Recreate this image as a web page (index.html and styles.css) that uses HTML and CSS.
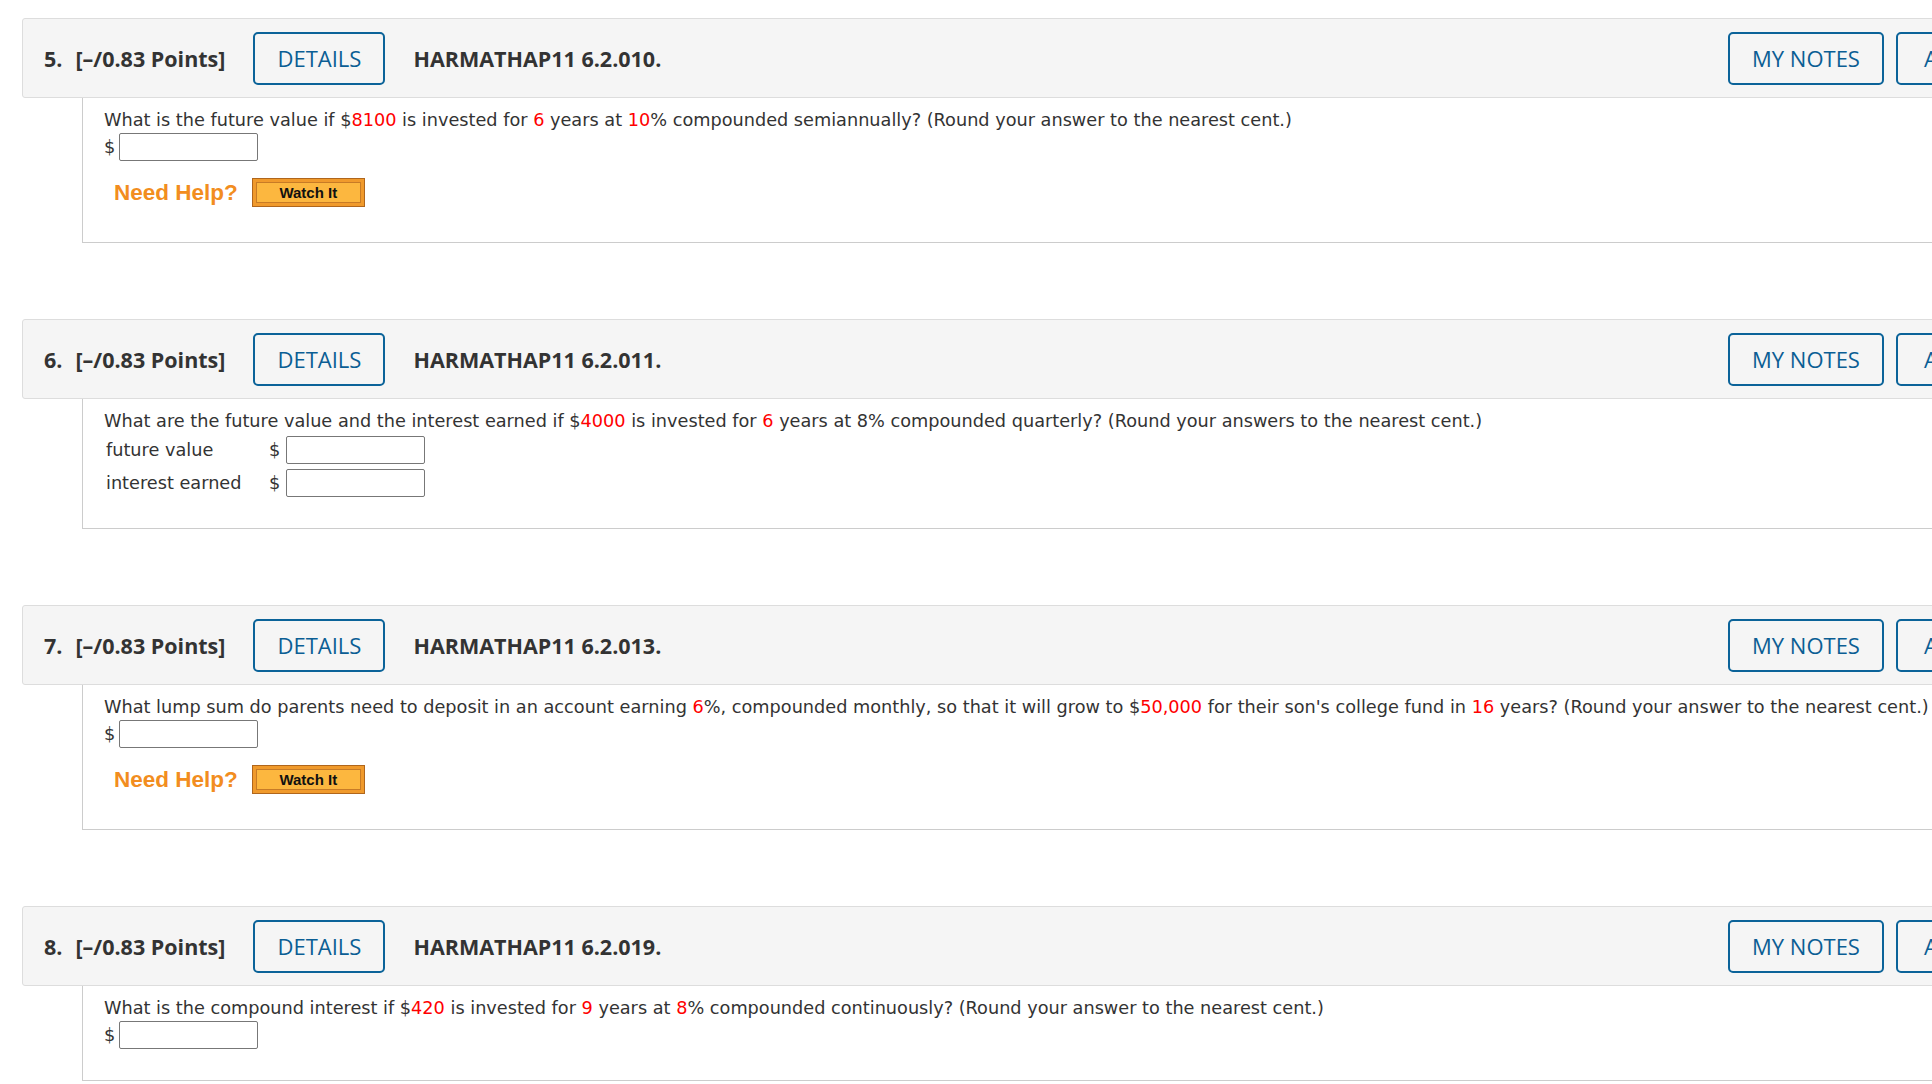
FILE: index.html
```html
<!DOCTYPE html>
<html lang="en">
<head>
<meta charset="utf-8">
<title>Assignment</title>
<link rel="stylesheet" href="styles.css">
</head>
<body>
<div class="page">

  <section class="question">
    <div class="q-head">
      <span class="q-num">5.</span>
      <span class="q-points">[&ndash;/0.83 Points]</span>
      <button class="btn btn-details">DETAILS</button>
      <span class="q-title">HARMATHAP11 6.2.010.</span>
      <button class="btn btn-notes">MY NOTES</button>
      <button class="btn btn-ask">ASK YOUR TEACHER</button>
    </div>
    <div class="q-body">
      <p class="q-text">What is the future value if $<span class="red">8100</span> is invested for <span class="red">6</span> years at <span class="red">10</span>% compounded semiannually? (Round your answer to the nearest cent.)</p>
      <div class="answer-row"><span class="dollar">$</span><input class="answer" type="text"></div>
      <div class="help-row"><span class="need-help">Need Help?</span><button class="watch"><span class="watch-inner">Watch It</span></button></div>
    </div>
  </section>

  <section class="question">
    <div class="q-head">
      <span class="q-num">6.</span>
      <span class="q-points">[&ndash;/0.83 Points]</span>
      <button class="btn btn-details">DETAILS</button>
      <span class="q-title">HARMATHAP11 6.2.011.</span>
      <button class="btn btn-notes">MY NOTES</button>
      <button class="btn btn-ask">ASK YOUR TEACHER</button>
    </div>
    <div class="q-body">
      <p class="q-text">What are the future value and the interest earned if $<span class="red">4000</span> is invested for <span class="red">6</span> years at 8% compounded quarterly? (Round your answers to the nearest cent.)</p>
      <div class="answer-grid">
        <span class="label">future value</span><span class="dollar">$</span><input class="answer" type="text">
        <span class="label">interest earned</span><span class="dollar">$</span><input class="answer" type="text">
      </div>
    </div>
  </section>

  <section class="question">
    <div class="q-head">
      <span class="q-num">7.</span>
      <span class="q-points">[&ndash;/0.83 Points]</span>
      <button class="btn btn-details">DETAILS</button>
      <span class="q-title">HARMATHAP11 6.2.013.</span>
      <button class="btn btn-notes">MY NOTES</button>
      <button class="btn btn-ask">ASK YOUR TEACHER</button>
    </div>
    <div class="q-body">
      <p class="q-text">What lump sum do parents need to deposit in an account earning <span class="red">6</span>%, compounded monthly, so that it will grow to $<span class="red">50,000</span> for their son's college fund in <span class="red">16</span> years? (Round your answer to the nearest cent.)</p>
      <div class="answer-row"><span class="dollar">$</span><input class="answer" type="text"></div>
      <div class="help-row"><span class="need-help">Need Help?</span><button class="watch"><span class="watch-inner">Watch It</span></button></div>
    </div>
  </section>

  <section class="question">
    <div class="q-head">
      <span class="q-num">8.</span>
      <span class="q-points">[&ndash;/0.83 Points]</span>
      <button class="btn btn-details">DETAILS</button>
      <span class="q-title">HARMATHAP11 6.2.019.</span>
      <button class="btn btn-notes">MY NOTES</button>
      <button class="btn btn-ask">ASK YOUR TEACHER</button>
    </div>
    <div class="q-body">
      <p class="q-text">What is the compound interest if $<span class="red">420</span> is invested for <span class="red">9</span> years at <span class="red">8</span>% compounded continuously? (Round your answer to the nearest cent.)</p>
      <div class="answer-row"><span class="dollar">$</span><input class="answer" type="text"></div>
    </div>
  </section>

</div>
</body>
</html>
```

FILE: styles.css
```css
html, body {
  margin: 0;
  padding: 0;
  overflow: hidden;
  background: #ffffff;
}

.page {
  width: 2200px;
  padding: 18px 0 0 22px;
  color: #333333;
}

.question {
  margin-bottom: 76px;
}

.q-head {
  box-sizing: border-box;
  width: 2155px;
  height: 80px;
  display: flex;
  align-items: center;
  padding: 0 20px 0 21px;
  background: #f5f5f5;
  border: 1px solid #dddddd;
  border-radius: 3px;
  font-family: "Open Sans", "Liberation Sans", sans-serif;
  font-size: 21.5px;
  color: #333333;
}

.q-num {
  font-weight: 700;
  margin-right: 13px;
}

.q-points {
  font-weight: 700;
}

.btn {
  box-sizing: border-box;
  height: 53px;
  border: 2px solid #0b6399;
  border-radius: 5px;
  background: transparent;
  color: #0b5e94;
  font-family: "Open Sans", "Liberation Sans", sans-serif;
  font-size: 22px;
  font-weight: 400;
  padding: 0;
  cursor: pointer;
}

.btn-details {
  width: 132px;
  margin-left: 28px;
}

.q-title {
  flex: 1;
  font-weight: 700;
  margin-left: 28px;
}

.btn-notes {
  width: 156px;
}

.btn-ask {
  width: 260px;
  margin-left: 12px;
}

.q-body {
  box-sizing: border-box;
  width: 2095px;
  margin-left: 60px;
  padding: 11px 0 31px 21px;
  border-left: 1px solid #cccccc;
  border-bottom: 1px solid #cccccc;
  font-family: "DejaVu Sans", Verdana, sans-serif;
  font-size: 17.7px;
  color: #333333;
}

.q-text {
  margin: 0;
  line-height: 22px;
  white-space: nowrap;
}

.red {
  color: #ff0000;
}

.answer-row {
  display: flex;
  align-items: center;
  gap: 4px;
  margin-top: 2px;
}

.dollar {
  line-height: 22px;
}

.answer {
  box-sizing: border-box;
  width: 139px;
  height: 28px;
  margin: 0;
  border: 1px solid #777777;
  border-radius: 2px;
  background: #ffffff;
}

.help-row {
  display: flex;
  align-items: center;
  margin-top: 17px;
  margin-bottom: 4px;
  padding-left: 10px;
  height: 29px;
}

.need-help {
  font-family: "Liberation Sans", Arial, sans-serif;
  font-weight: 700;
  font-size: 22.5px;
  color: #f28d20;
  margin-right: 14px;
}

.watch {
  box-sizing: border-box;
  width: 113px;
  height: 29px;
  padding: 3px;
  border: 1px solid #b0661c;
  background: #f09a2c;
  cursor: pointer;
  display: flex;
}

.watch-inner {
  flex: 1;
  display: flex;
  align-items: center;
  justify-content: center;
  border: 1px solid #c77b26;
  background: #fcb73f;
  font-family: "Liberation Sans", Arial, sans-serif;
  font-weight: 700;
  font-size: 15px;
  color: #111111;
}

.answer-grid {
  display: grid;
  grid-template-columns: 163px 17px 139px;
  row-gap: 5px;
  align-items: center;
  margin-top: 4px;
  padding-left: 2px;
}

.answer-grid .label {
  line-height: 22px;
}
```
